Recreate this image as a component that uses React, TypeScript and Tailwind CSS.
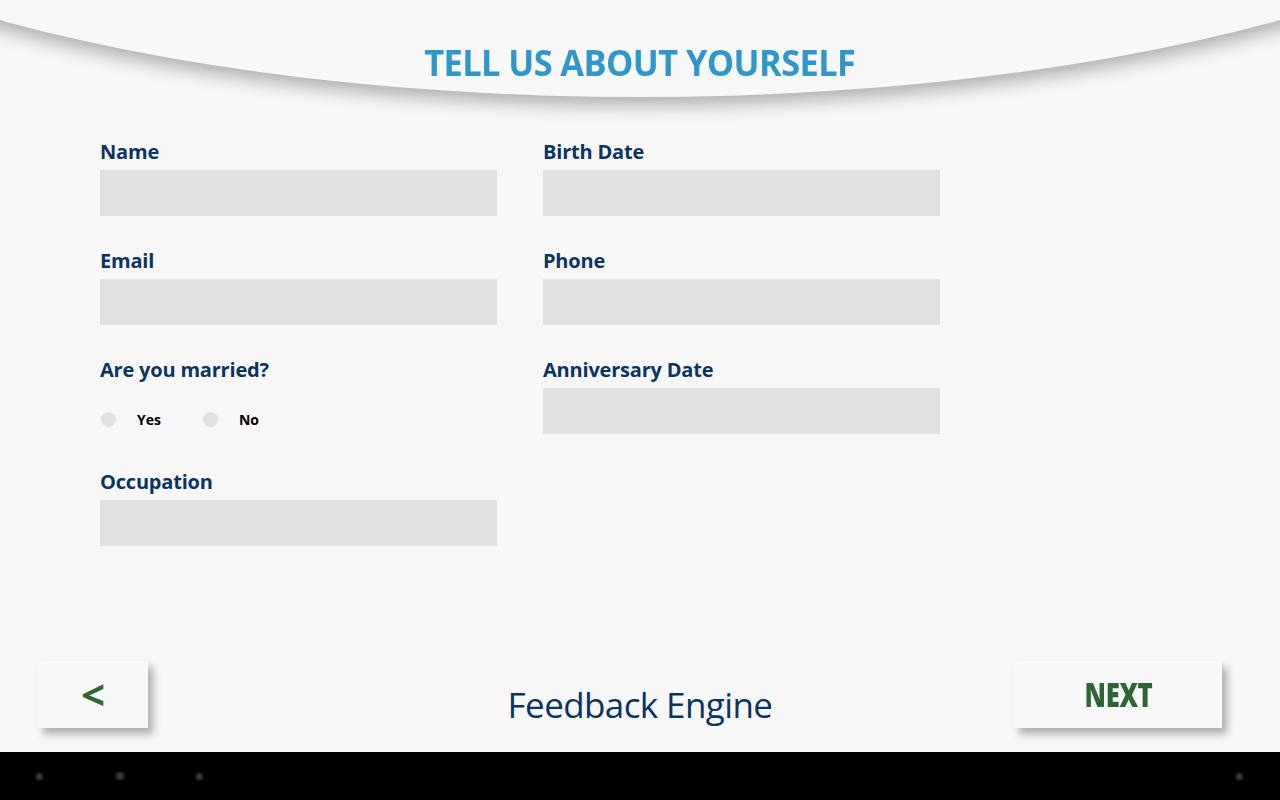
import React, { useState } from "react";

const font = { fontFamily: '"Open Sans", "Noto Sans", "DejaVu Sans", sans-serif' };

function Field({ label }: { label: string }) {
  return (
    <div className="flex flex-col">
      <div className="h-[24px] text-[20px] leading-[26px] font-bold text-[#0c3463] tracking-[-0.2px]">{label}</div>
      <input className="mt-[7px] h-[46px] w-[397px] bg-[#e1e1e1] outline-none px-3 text-[16px]" />
    </div>
  );
}

function Radio({ label, checked, onClick }: { label: string; checked: boolean; onClick: () => void }) {
  return (
    <button onClick={onClick} className="flex items-center cursor-pointer">
      <span className="flex h-[15px] w-[15px] items-center justify-center rounded-full bg-[#e0e0e0]">
        {checked && <span className="h-[7px] w-[7px] rounded-full bg-[#0c3463]" />}
      </span>
      <span className="ml-[21px] text-[14px] font-bold text-black">{label}</span>
    </button>
  );
}

export default function App() {
  const [married, setMarried] = useState("");

  return (
    <div className="flex h-[800px] w-[1280px] flex-col overflow-hidden bg-[#f7f7f7]" style={font}>
      <div className="relative flex h-[752px] flex-col overflow-hidden">
        {/* curved header */}
        <div className="absolute left-[-360px] top-[-567px] h-[664px] w-[2000px] rounded-[50%] bg-[#f8f8f8] shadow-[0_8px_18px_rgba(0,0,0,0.3)]" />

        <div className="relative h-[139px] pt-[39px] text-center">
          <h1 className="inline-block scale-x-[0.955] text-[36px] leading-[48px] font-bold tracking-[-0.6px] text-[#2f97ca]">
            TELL US ABOUT YOURSELF
          </h1>
        </div>

        <div className="relative flex gap-[46px] pl-[100px]">
          <div className="flex flex-col gap-[32px]">
            <Field label="Name" />
            <Field label="Email" />
            <div className="flex flex-col">
              <div className="h-[24px] text-[20px] leading-[26px] font-bold text-[#0c3463] tracking-[-0.2px]">
                Are you married?
              </div>
              <div className="mt-[27px] mb-[7px] flex h-[22px] items-center gap-[42px] pl-px">
                <Radio label="Yes" checked={married === "yes"} onClick={() => setMarried("yes")} />
                <Radio label="No" checked={married === "no"} onClick={() => setMarried("no")} />
              </div>
            </div>
            <Field label="Occupation" />
          </div>
          <div className="flex flex-col gap-[32px]">
            <Field label="Birth Date" />
            <Field label="Phone" />
            <Field label="Anniversary Date" />
          </div>
        </div>

        <div className="flex-1" />

        <div className="relative grid grid-cols-[1fr_auto_1fr] items-start px-[38px] pb-[23px]">
          <button className="flex h-[67px] w-[110px] items-center justify-center justify-self-start bg-[#f8f8f8] shadow-[5px_6px_8px_rgba(0,0,0,0.3)]">
            <span className="text-[42px] leading-none font-bold text-[#2d6535] -mt-[2px]">&lt;</span>
          </button>
          <div className="pt-[20px] text-[35px] leading-[48px] tracking-[-0.6px] text-[#0c3463]">Feedback Engine</div>
          <button className="mr-[20px] flex h-[67px] w-[208px] items-center justify-center justify-self-end bg-[#f8f8f8] shadow-[5px_6px_8px_rgba(0,0,0,0.3)]">
            <span className="inline-block scale-x-[0.78] text-[33px] leading-none font-extrabold tracking-[-0.5px] text-[#2d6535]">
              NEXT
            </span>
          </button>
        </div>
      </div>

      <div className="relative flex h-[48px] items-center bg-black">
        <span className="absolute left-[36px] h-[7px] w-[7px] rounded-full bg-[#3a3a3a] blur-[1px]" />
        <span className="absolute left-[116px] h-[8px] w-[8px] rounded-full bg-[#3a3a3a] blur-[1px]" />
        <span className="absolute left-[196px] h-[7px] w-[7px] rounded-full bg-[#3a3a3a] blur-[1px]" />
        <span className="absolute left-[1236px] h-[7px] w-[7px] rounded-full bg-[#3a3a3a] blur-[1px]" />
      </div>
    </div>
  );
}
